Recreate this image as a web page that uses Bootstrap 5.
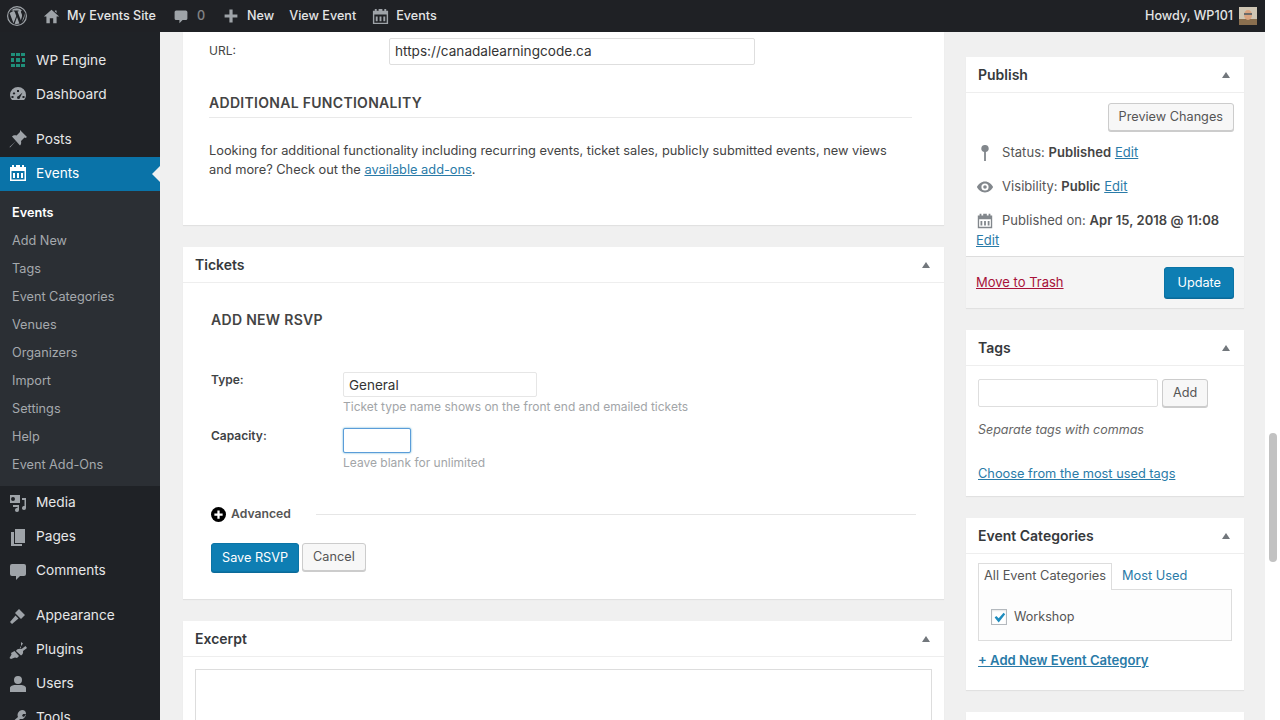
<!DOCTYPE html>
<html lang="en">
<head>
    <meta charset="UTF-8">
    <title>Edit Event</title>
    <meta name="viewport" content="width=device-width, initial-scale=1">
    <link href="https://cdn.jsdelivr.net/npm/bootstrap@5.3.2/dist/css/bootstrap.min.css" rel="stylesheet">
    <style>
        html, body { height: 720px; overflow: hidden; }
        body { background: #fff; font-family: Inter, "Liberation Sans", sans-serif; font-size: 13px; color: #444; }
        a { color: #2a7ba8; }
        .wp-app { width: 1265px; height: 720px; background: #f0f0f0; overflow: hidden; }
        .wp-bar { height: 32px; background: #1f2125; color: #e4e5e6; font-size: 12.6px; font-weight: 500; flex: none; }
        .wp-bar svg { fill: #9ea3a8; flex: none; }
        .wp-side { width: 160px; height: 688px; background: #1f2226; flex: none; padding-top: 11px; overflow: hidden; }
        .side-item { height: 34px; color: #e6e7e8; font-size: 13.7px; padding-left: 8px; gap: 8px; font-weight: 400; }
        .side-item svg { width: 20px; height: 20px; fill: #9ea3a8; flex: none; }
        .side-gap { margin-top: 11px; }
        .side-up { padding-bottom: 1px; }
        .side-active { background: #0a73a8; color: #fff; margin-top: 1px; position: relative; padding-bottom: 2px; }
        .side-active svg { fill: #fff; }
        .side-active::after { content: ""; position: absolute; right: 0; top: 9px; border: 8px solid transparent; border-right-color: #f0f0f0; border-left: 0; }
        .side-sub { background: #2b2f34; padding: 8px 0 7px; }
        .side-sub div { height: 28px; line-height: 28px; padding-left: 12px; font-size: 12.7px; color: #a5a9ad; }
        .side-sub .sub-on { color: #fff; font-weight: 600; }
        .wp-main { width: 761px; margin-left: 23px; flex: none; }
        .wp-rail { width: 278px; margin-left: 22px; padding-top: 25px; flex: none; }
        .box { border: 0; border-radius: 0; background: #fff; box-shadow: 0 1px 1px rgba(0,0,0,.06); margin-bottom: 22px; color: #444; --bs-card-bg: #fff; }
        .box-head { height: 36px; padding: 0 12px 1px; border-bottom: 1px solid #eee; font-size: 14px; font-weight: 600; color: #36393c; }
        .box-arrow { width: 0; height: 0; border: 4px solid transparent; border-bottom: 6px solid #72777c; border-top: 0; margin: 2px 2px 0 0; }
        .url-box { height: 193px; padding: 6px 26px 0; }
        .url-label { width: 180px; font-size: 12px; margin-top: -2px; }
        .plain-input { border: 1px solid #dedede; border-radius: 2px; background: #fff; font-size: 13.5px; color: #333; padding: 0 5px; }
        .url-input { width: 366px; height: 27px; font-size: 13.6px; }
        .func-title { font-size: 14px; font-weight: 600; letter-spacing: .3px; color: #444; margin: 30px 0 0; height: 23px; border-bottom: 1px solid #e9e9e9; width: 703px; }
        .func-text { font-size: 12.8px; line-height: 19px; margin: 23px 0 0; width: 690px; }
        .tick-box { height: 316px; padding: 28px 28px 0; }
        .tick-title { font-size: 14px; font-weight: 600; letter-spacing: .3px; margin: 0 0 43px; height: 18px; line-height: 18px; }
        .tick-label { width: 132px; font-weight: 600; font-size: 12px; color: #3f4346; margin-top: -1px; }
        .tick-help { font-size: 12px; color: #a2a5a8; height: 18px; line-height: 18px; margin-top: 1px; }
        .type-input { width: 194px; height: 25px; line-height: 24px; border-color: #e6e6e6; }
        .cap-row { margin-top: 12px; }
        .cap-input { width: 68px; height: 25px; border: 1px solid #5b9dd9; box-shadow: 0 0 2px rgba(30,140,190,.8); }
        .adv-row { margin-top: 31px; height: 22px; font-weight: 600; font-size: 12.2px; color: #555; }
        .adv-icon { margin-right: 5px; flex: none; }
        .adv-line { width: 600px; height: 1px; background: #e6e6e6; margin-left: 25px; }
        .btn-row { margin-top: 18px; gap: 3px; }
        .wp-btn { height: 28px; border: 1px solid #ccc; border-radius: 3px; background: #f7f7f7; box-shadow: 0 1px 0 #ccc; color: #555; font-size: 12.7px; padding: 0 10px; line-height: 26px; --bs-btn-hover-bg: #f7f7f7; }
        .wp-btn-blue { background: #0e7eb3; border: 1px solid #0b74a6; box-shadow: 0 1px 0 #0b6a99; color: #fff; height: 29px; }
        .upd-btn { height: 31px; padding: 0 12px; line-height: 29px; }
        .excerpt-area { height: 90px; margin: 12px 12px 0; border: 1px solid #ddd; border-radius: 0; }
        .pub-body { padding: 10px 10px 0; height: 163px; }
        .pub-first { margin-top: 5px; }
        .pub-line { height: 34px; font-size: 13px; letter-spacing: .05px; gap: 8px; padding-left: 0; color: #555; }
        .pub-line b { font-weight: 600; color: #444; }
        .pub-line svg { width: 18px; height: 18px; fill: #82878c; flex: none; }
        .pub-edit { margin-top: -7px; }
        .pub-foot { height: 52px; background: #f5f5f5; border-top: 1px solid #ddd; padding: 0 10px; }
        .trash-link { color: #a8123a; }
        .tag-box { height: 130px; padding: 13px 12px 0; }
        .tag-input { width: 180px; height: 28px; }
        .tag-help { font-style: italic; font-size: 12.5px; color: #666; margin-top: 13px; height: 19px; line-height: 19px; }
        .tag-link { margin-top: 25px; display: block; font-size: 12.8px; }
        .cat-box { height: 136px; padding: 9px 12px 0; }
        .cat-tab { width: 134px; height: 27px; border: 1px solid #ddd; border-bottom: 0; text-align: center; line-height: 24px; font-size: 12.8px; background: #fff; position: relative; z-index: 1; margin-bottom: -1px; color: #555; }
        .cat-tab2 { padding-left: 10px; font-size: 12.8px; line-height: 26px; }
        .cat-panel { width: 254px; height: 52px; border: 1px solid #ddd; background: #fdfdfd; padding: 4px 12px 0; gap: 7px; font-size: 12.6px; color: #555; }
        .cat-check { width: 16px; height: 16px; border: 1px solid #b4b9be; background: #fff; box-shadow: inset 0 1px 2px rgba(0,0,0,.1); }
        .cat-add { display: block; margin-top: 10px; font-weight: 600; font-size: 13.1px; }
        .wp-strip { width: 15px; flex: none; background: #fff; }
        .wp-thumb { width: 8px; height: 129px; margin: 433px 0 0 4px; background: #c2c2c2; border-radius: 4px; }
    </style>
</head>
<body>
    <svg width="0" height="0" class="d-block">
        <symbol id="ic-cal" viewBox="0 0 20 20"><path d="M4 2h2v2h2V2h4v2h2V2h2v2h2v14H2V4h2zM3.500 8v8.500h13V8zM5 10h2v5H5zm4 0h2v5H9zm4 0h2v5h-2z" fill-rule="evenodd"/></symbol>
        <symbol id="ic-bubble" viewBox="0 0 20 20"><path d="M4 3h12a2 2 0 0 1 2 2v8a2 2 0 0 1-2 2h-4l-4 4v-4H4a2 2 0 0 1-2-2V5a2 2 0 0 1 2-2z"/></symbol>
    </svg>
    <div class="d-flex">
    <div class="wp-app">
        <div class="wp-bar d-flex align-items-center">
            <svg width="20" height="20" viewBox="0 0 20 20" style="margin-left:7px"><path fill-rule="evenodd" d="M10 0a10 10 0 1 1 0 20 10 10 0 0 1 0-20zm0 1.200a8.800 8.800 0 1 0 0 17.600 8.800 8.800 0 0 0 0-17.600zM2.600 7l3.900 10.200L9.300 10 7.600 5.400l-1-.1v-.7h5v.7l-1.100.1 3.300 8.800 1-3c.5-1.600.2-3-.4-4-.6-1-.9-2.300.6-2.800A8 8 0 0 0 4.200 4.500l1.700-.1v.8zM10 11l2.400 6.600a8 8 0 0 1-4.700.1zm7.200-4.200c.8 2.500.5 5.500-2.300 9.300l2-5.900c.3-1 .5-2.200.3-3.400z"/></svg>
            <svg width="17" height="17" viewBox="0 0 20 20" class="ms-3"><path d="M10 2l9 8h-3v8h-4v-6H8v6H4v-8H1zM14 3h2v3l-2-2z"/></svg>
            <span style="margin-left:7px">My Events Site</span>
            <svg width="16" height="16" viewBox="0 0 20 20" style="margin-left:17px"><use href="#ic-bubble"/></svg>
            <span class="ms-2 opacity-50">0</span>
            <svg width="16" height="16" viewBox="0 0 20 20" style="margin-left:18px"><path d="M8 2h4v6h6v4h-6v6H8v-6H2V8h6z"/></svg>
            <span class="ms-2">New</span>
            <span style="margin-left:15px">View Event</span>
            <svg width="19" height="19" viewBox="0 0 20 20" style="margin-left:15px"><use href="#ic-cal"/></svg>
            <span style="margin-left:6px">Events</span>
            <span class="ms-auto">Howdy, WP101</span>
            <svg width="18" height="18" viewBox="0 0 18 18" style="margin:0 8px 0 6px;fill:none"><rect width="18" height="18" fill="#cfc6b4"/><rect y="12" width="18" height="6" fill="#8a6f4f"/><ellipse cx="9" cy="8" rx="4" ry="5" fill="#d9a37f"/><rect x="5" y="6" width="8" height="2" fill="#6a6a6a"/></svg>
        </div>
        <div class="d-flex">
            <nav class="wp-side">
                <div class="side-item d-flex align-items-center"><svg viewBox="0 0 20 20" style="fill:#1f8f7a"><path d="M3 3h4v3H3zm5 0h4v3H8zm5 0h4v3h-4zM3 8h3v4H3zm11 0h3v4h-3zM3 14h4v3H3zm5 0h4v3H8zm5 0h4v3h-4zM8 8h4v4H8z"/></svg>WP Engine</div>
                <div class="side-item d-flex align-items-center"><svg viewBox="0 0 20 20"><path fill-rule="evenodd" d="M10 3a8 8 0 0 1 8 8c0 2-.7 3.800-2 5H4a8 8 0 0 1-2-5 8 8 0 0 1 8-8zm1 3H9v2h2zM6 8l-1.400 1.400L6 10.800 7.400 9.400zm8.500.500L10.500 12a1.500 1.500 0 1 0 1.500 1.500zM5.500 12h-2v2h2zm11 0h-2v2h2z"/></svg>Dashboard</div>
                <div class="side-item side-gap d-flex align-items-center"><svg viewBox="0 0 20 20"><path d="M12 1l7 7-1.500 1-1-.5-3.500 3.500c.5 2 0 3.500-1 4.500L8 12l-6 6.500L1.500 18 8 12 4 7.500c1-1 2.500-1.500 4.500-1L12 3z"/></svg>Posts</div>
                <div class="side-item side-active d-flex align-items-center"><svg viewBox="0 0 20 20"><use href="#ic-cal"/></svg>Events</div>
                <div class="side-sub">
                    <div class="sub-on">Events</div>
                    <div>Add New</div>
                    <div>Tags</div>
                    <div>Event Categories</div>
                    <div>Venues</div>
                    <div>Organizers</div>
                    <div>Import</div>
                    <div>Settings</div>
                    <div>Help</div>
                    <div>Event Add-Ons</div>
                </div>
                <div class="side-item side-up d-flex align-items-center"><svg viewBox="0 0 20 20"><path fill-rule="evenodd" d="M2 2h10v8H2zm3 2a2 2 0 0 0 0 4 2 2 0 0 0 0-4zM14 5h4v10a2 2 0 1 1-1.500-1.900V7H14zM5 12h6v5a2 2 0 1 1-1.500-1.900V14H5z"/></svg>Media</div>
                <div class="side-item side-up d-flex align-items-center"><svg viewBox="0 0 20 20"><path d="M7 2h10v14H7zM3 5h3v12h8v2H3z"/></svg>Pages</div>
                <div class="side-item side-up d-flex align-items-center"><svg viewBox="0 0 20 20"><use href="#ic-bubble"/></svg>Comments</div>
                <div class="side-item side-up side-gap d-flex align-items-center"><svg viewBox="0 0 20 20"><path d="M11 3l6 6-4 4-6-6zM7.500 9.500l3 3L4 18l-2-2z"/></svg>Appearance</div>
                <div class="side-item side-up d-flex align-items-center"><svg viewBox="0 0 20 20"><path d="M13 2l2 1.500-3 4 1.500 1.500 4-3L19 8l-4 3c.500 2-.5 3.500-2 4.500L8 11c1-1.500 2.500-2.500 5-2zM6.500 11l4.500 5-2 2-2-.5L3 19l-1.500-1 2-3.500L3 13z"/></svg>Plugins</div>
                <div class="side-item side-up d-flex align-items-center"><svg viewBox="0 0 20 20"><path d="M10 2a4 4 0 1 1 0 8 4 4 0 0 1 0-8zM2 14c0-2 3-3 5-3h6c2 0 5 1 5 3v4H2z"/></svg>Users</div>
                <div class="side-item side-up d-flex align-items-center"><svg viewBox="0 0 20 20"><path d="M14 2a4 4 0 0 1 4 4l-3 0-1 2 2 1 2-3a5 5 0 0 1-6 5l-7 8-3-3 8-7a5 5 0 0 1 4-7z"/></svg>Tools</div>
            </nav>
            <main class="wp-main">
                <div class="card box url-box">
                    <div class="d-flex align-items-center">
                        <label class="url-label">URL:</label>
                        <div class="plain-input url-input d-flex align-items-center">https://canadalearningcode.ca</div>
                    </div>
                    <h5 class="func-title">ADDITIONAL FUNCTIONALITY</h5>
                    <p class="func-text">Looking for additional functionality including recurring events, ticket sales, publicly submitted events, new views and more? Check out the <a href="#">available add-ons</a>.</p>
                </div>
                <div class="card box">
                    <div class="box-head d-flex align-items-center justify-content-between">Tickets<span class="box-arrow"></span></div>
                    <div class="tick-box">
                        <h5 class="tick-title">ADD NEW RSVP</h5>
                        <div class="d-flex">
                            <div class="tick-label">Type:</div>
                            <div>
                                <div class="plain-input type-input">General</div>
                                <div class="tick-help">Ticket type name shows on the front end and emailed tickets</div>
                            </div>
                        </div>
                        <div class="d-flex cap-row">
                            <div class="tick-label">Capacity:</div>
                            <div>
                                <div class="plain-input cap-input"></div>
                                <div class="tick-help">Leave blank for unlimited</div>
                            </div>
                        </div>
                        <div class="adv-row d-flex align-items-center">
                            <svg width="15" height="15" viewBox="0 0 20 20" class="adv-icon"><circle cx="10" cy="10" r="10" fill="#000"/><path d="M8.500 4.500h3v4h4v3h-4v4h-3v-4h-4v-3h4z" fill="#fff"/></svg>
                            <span>Advanced</span>
                            <span class="adv-line"></span>
                        </div>
                        <div class="d-flex btn-row">
                            <button class="btn wp-btn wp-btn-blue">Save RSVP</button>
                            <button class="btn wp-btn">Cancel</button>
                        </div>
                    </div>
                </div>
                <div class="card box">
                    <div class="box-head d-flex align-items-center justify-content-between">Excerpt<span class="box-arrow"></span></div>
                    <div class="plain-input excerpt-area"></div>
                </div>
            </main>
            <aside class="wp-rail">
                <div class="card box">
                    <div class="box-head d-flex align-items-center justify-content-between">Publish<span class="box-arrow"></span></div>
                    <div class="pub-body">
                        <div class="d-flex justify-content-end"><button class="btn wp-btn">Preview Changes</button></div>
                        <div class="pub-line pub-first d-flex align-items-center"><svg viewBox="0 0 20 20"><path d="M10 1a4 4 0 0 1 1 7.900V19H9V8.900A4 4 0 0 1 10 1z"/></svg><span>Status: <b>Published</b> <a href="#">Edit</a></span></div>
                        <div class="pub-line d-flex align-items-center"><svg viewBox="0 0 20 20"><path fill-rule="evenodd" d="M10 4c4 0 7.500 3 9 6-1.500 3-5 6-9 6s-7.500-3-9-6c1.500-3 5-6 9-6zm0 2a4 4 0 1 0 0 8 4 4 0 0 0 0-8zm0 2a2 2 0 1 1 0 4 2 2 0 0 1 0-4z"/></svg><span>Visibility: <b>Public</b> <a href="#">Edit</a></span></div>
                        <div class="pub-line d-flex align-items-center"><svg viewBox="0 0 20 20"><use href="#ic-cal"/></svg><span>Published on: <b>Apr 15, 2018 @ 11:08</b></span></div>
                        <a href="#" class="d-block pub-edit">Edit</a>
                    </div>
                    <div class="pub-foot d-flex align-items-center justify-content-between">
                        <a href="#" class="trash-link">Move to Trash</a>
                        <button class="btn wp-btn wp-btn-blue upd-btn">Update</button>
                    </div>
                </div>
                <div class="card box">
                    <div class="box-head d-flex align-items-center justify-content-between">Tags<span class="box-arrow"></span></div>
                    <div class="tag-box">
                        <div class="d-flex gap-1">
                            <div class="plain-input tag-input"></div>
                            <button class="btn wp-btn">Add</button>
                        </div>
                        <div class="tag-help">Separate tags with commas</div>
                        <a href="#" class="tag-link">Choose from the most used tags</a>
                    </div>
                </div>
                <div class="card box">
                    <div class="box-head d-flex align-items-center justify-content-between">Event Categories<span class="box-arrow"></span></div>
                    <div class="cat-box">
                        <div class="d-flex">
                            <div class="cat-tab">All Event Categories</div>
                            <a href="#" class="cat-tab2 text-decoration-none">Most Used</a>
                        </div>
                        <div class="cat-panel d-flex align-items-center">
                            <span class="cat-check d-flex align-items-center justify-content-center"><svg width="13" height="13" viewBox="0 0 16 16"><path d="M2 8l2-2 3 3 6-7 2 2-8 10z" fill="#1e8cbe"/></svg></span>
                            Workshop
                        </div>
                        <a href="#" class="cat-add">+ Add New Event Category</a>
                    </div>
                </div>
                <div class="card box"><div class="box-head"></div></div>
            </aside>
        </div>
    </div>
    <div class="wp-strip"><div class="wp-thumb"></div></div>
    </div>
    <script src="https://cdn.jsdelivr.net/npm/bootstrap@5.3.2/dist/js/bootstrap.bundle.min.js"></script>
</body>
</html>
